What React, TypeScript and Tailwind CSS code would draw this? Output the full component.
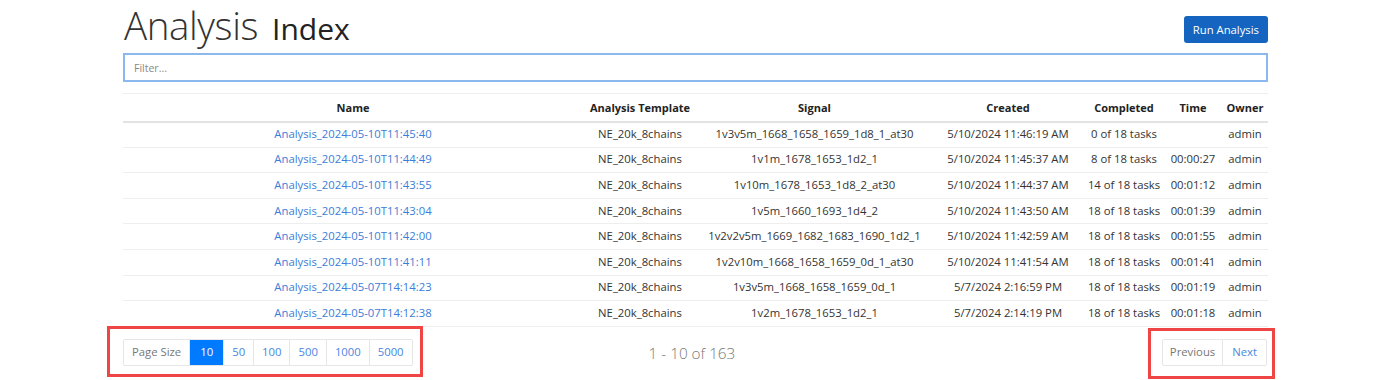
import React from 'react';

type Row = {
  name: string;
  template: string;
  signal: string;
  created: string;
  completed: string;
  time: string;
  owner: string;
};

const rows: Row[] = [
  { name: 'Analysis_2024-05-10T11:45:40', template: 'NE_20k_8chains', signal: '1v3v5m_1668_1658_1659_1d8_1_at30', created: '5/10/2024 11:46:19 AM', completed: '0 of 18 tasks', time: '', owner: 'admin' },
  { name: 'Analysis_2024-05-10T11:44:49', template: 'NE_20k_8chains', signal: '1v1m_1678_1653_1d2_1', created: '5/10/2024 11:45:37 AM', completed: '8 of 18 tasks', time: '00:00:27', owner: 'admin' },
  { name: 'Analysis_2024-05-10T11:43:55', template: 'NE_20k_8chains', signal: '1v10m_1678_1653_1d8_2_at30', created: '5/10/2024 11:44:37 AM', completed: '14 of 18 tasks', time: '00:01:12', owner: 'admin' },
  { name: 'Analysis_2024-05-10T11:43:04', template: 'NE_20k_8chains', signal: '1v5m_1660_1693_1d4_2', created: '5/10/2024 11:43:50 AM', completed: '18 of 18 tasks', time: '00:01:39', owner: 'admin' },
  { name: 'Analysis_2024-05-10T11:42:00', template: 'NE_20k_8chains', signal: '1v2v2v5m_1669_1682_1683_1690_1d2_1', created: '5/10/2024 11:42:59 AM', completed: '18 of 18 tasks', time: '00:01:55', owner: 'admin' },
  { name: 'Analysis_2024-05-10T11:41:11', template: 'NE_20k_8chains', signal: '1v2v10m_1668_1658_1659_0d_1_at30', created: '5/10/2024 11:41:54 AM', completed: '18 of 18 tasks', time: '00:01:41', owner: 'admin' },
  { name: 'Analysis_2024-05-07T14:14:23', template: 'NE_20k_8chains', signal: '1v3v5m_1668_1658_1659_0d_1', created: '5/7/2024 2:16:59 PM', completed: '18 of 18 tasks', time: '00:01:19', owner: 'admin' },
  { name: 'Analysis_2024-05-07T14:12:38', template: 'NE_20k_8chains', signal: '1v2m_1678_1653_1d2_1', created: '5/7/2024 2:14:19 PM', completed: '18 of 18 tasks', time: '00:01:18', owner: 'admin' },
];

const pageSizes = ['10', '50', '100', '500', '1000', '5000'];

export default function App() {
  return (
    <div className="w-[1397px] h-[380px] bg-white overflow-hidden font-['Open_Sans','Noto_Sans',sans-serif] text-[#333]">
      <div className="ml-[123px] w-[1145px]">
        {/* Header */}
        <div className="flex items-start justify-between h-[53px]">
          <h1 className="mt-[1px] ml-[1px] flex items-baseline leading-[48px]">
            <span className="text-[38.5px] font-light text-[#333] tracking-[-0.4px]">Analysis</span>
            <span className="ml-[14px] text-[30px] font-normal text-[#222]">Index</span>
          </h1>
          <button className="mt-[16px] h-[27px] px-[9px] rounded-[3px] bg-[#1565c0] text-white text-[11.3px] leading-none">
            Run Analysis
          </button>
        </div>

        {/* Filter */}
        <input
          placeholder="Filter..."
          className="block w-full h-[29px] px-[9px] text-[10.5px] border-2 border-[#8cb8f0] bg-white outline-none placeholder:text-[#888]"
        />

        {/* Table */}
        <table className="mt-[11px] w-full table-fixed border-collapse text-[11.3px]">
          <colgroup>
            <col className="w-[460px]" />
            <col className="w-[114px]" />
            <col className="w-[235px]" />
            <col className="w-[152px]" />
            <col className="w-[80px]" />
            <col className="w-[58px]" />
            <col className="w-[46px]" />
          </colgroup>
          <thead>
            <tr className="h-[28px] border-t border-[#eee] border-b-2 border-b-[#e3e3e3]">
              {['Name', 'Analysis Template', 'Signal', 'Created', 'Completed', 'Time', 'Owner'].map((h) => (
                <th key={h} className="pt-[1px] font-bold text-[11px] text-[#222] text-center whitespace-nowrap">
                  {h}
                </th>
              ))}
            </tr>
          </thead>
          <tbody>
            {rows.map((r) => (
              <tr key={r.name} className="h-[25.6px] border-b border-[#eee]">
                <td className="text-center whitespace-nowrap">
                  <a className="text-[#3b7dd8]" href="#">{r.name}</a>
                </td>
                <td className="text-center whitespace-nowrap">{r.template}</td>
                <td className="text-center whitespace-nowrap">{r.signal}</td>
                <td className="text-center whitespace-nowrap">{r.created}</td>
                <td className="text-center whitespace-nowrap">{r.completed}</td>
                <td className="text-center whitespace-nowrap">{r.time}</td>
                <td className="text-center whitespace-nowrap">{r.owner}</td>
              </tr>
            ))}
          </tbody>
        </table>

        {/* Footer */}
        <div className="flex items-start justify-between">
          <div className="-ml-[16px] mt-[-1px] border-[3px] border-[#f04545] pl-[13px] pr-[7px] pt-[10px] pb-[8px]">
            <div className="flex h-[27px] text-[11.3px] border border-[#e6e6e6] rounded-[2px]">
              <span className="flex items-center px-[8px] text-[#777] border-r border-[#e6e6e6]">Page Size</span>
              {pageSizes.map((p, i) => (
                <span
                  key={p}
                  className={
                    i === 0
                      ? 'flex items-center justify-center w-[33px] bg-[#007bff] text-white'
                      : 'flex items-center px-[8px] text-[#4a86e0] border-l border-[#e6e6e6]'
                  }
                >
                  {p}
                </span>
              ))}
            </div>
          </div>

          <div className="mt-[15px] ml-[226px] text-[15.3px] font-light text-[#777]">1 - 10 of 163</div>

          <div className="flex-1" />

          <div className="mt-[1px] -mr-[7px] border-[3px] border-[#f04545] pl-[11px] pr-[5px] pt-[8px] pb-[10px]">
            <div className="flex h-[27px] text-[11.3px] border border-[#e6e6e6] rounded-[2px]">
              <span className="flex items-center px-[7px] text-[#777]">Previous</span>
              <span className="flex items-center px-[9px] text-[#4a86e0] border-l border-[#e6e6e6]">Next</span>
            </div>
          </div>
        </div>
      </div>
    </div>
  );
}
